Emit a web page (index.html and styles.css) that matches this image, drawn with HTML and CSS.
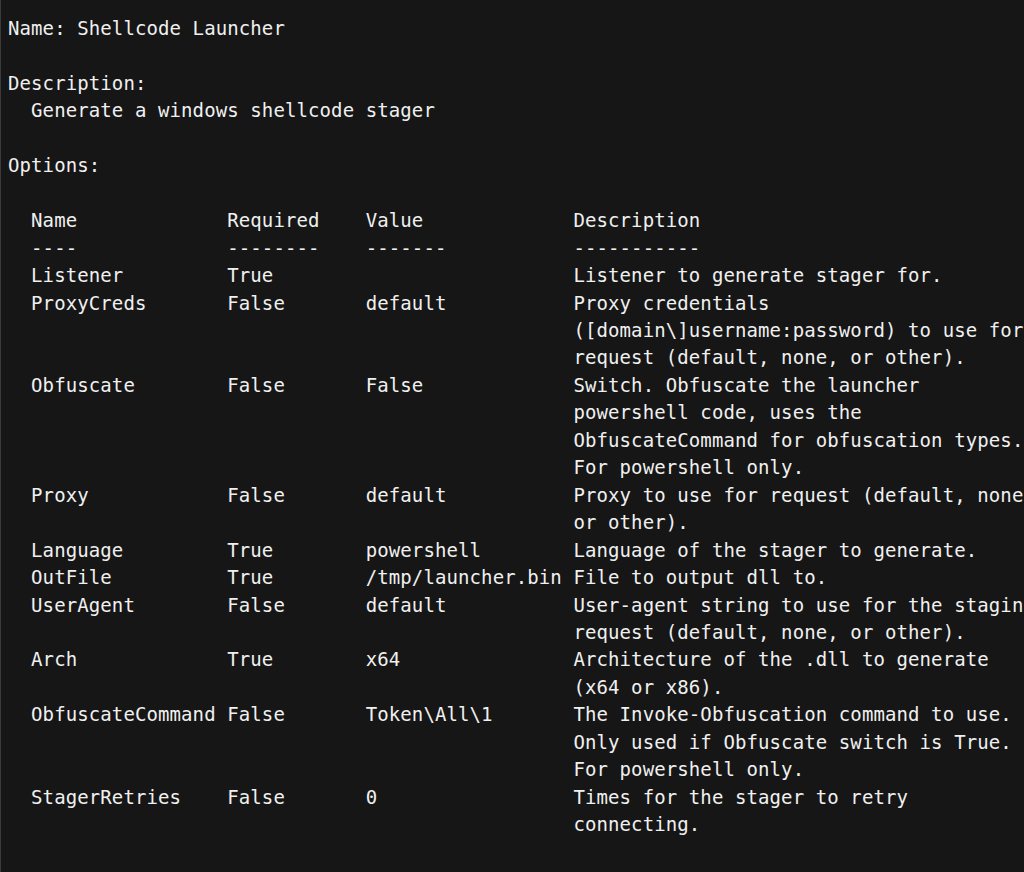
FILE: index.html
```html
<!DOCTYPE html>
<html>
<head>
<meta charset="utf-8">
<link rel="stylesheet" href="styles.css">
</head>
<body>
<main class="term">
<pre class="out">Name: Shellcode Launcher

Description:
  Generate a windows shellcode stager

Options:

  Name             Required    Value             Description
  ----             --------    -------           -----------
  Listener         True                          Listener to generate stager for.
  ProxyCreds       False       default           Proxy credentials
                                                 ([domain\]username:password) to use for
                                                 request (default, none, or other).
  Obfuscate        False       False             Switch. Obfuscate the launcher
                                                 powershell code, uses the
                                                 ObfuscateCommand for obfuscation types.
                                                 For powershell only.
  Proxy            False       default           Proxy to use for request (default, none,
                                                 or other).
  Language         True        powershell        Language of the stager to generate.
  OutFile          True        /tmp/launcher.bin File to output dll to.
  UserAgent        False       default           User-agent string to use for the staging
                                                 request (default, none, or other).
  Arch             True        x64               Architecture of the .dll to generate
                                                 (x64 or x86).
  ObfuscateCommand False       Token\All\1       The Invoke-Obfuscation command to use.
                                                 Only used if Obfuscate switch is True.
                                                 For powershell only.
  StagerRetries    False       0                 Times for the stager to retry
                                                 connecting.</pre>
</main>
</body>
</html>
```
FILE: styles.css
```css
html, body {
  margin: 0;
  padding: 0;
  background: #161616;
}
body {
  width: 1024px;
  height: 872px;
  overflow: hidden;
}
.term {
  box-sizing: border-box;
  height: 872px;
  border-left: 1px solid #3a3a3a;
  padding: 15px 0 0 7px;
  overflow: hidden;
}
.out {
  margin: 0;
  font-family: "DejaVu Sans Mono", "Liberation Mono", monospace;
  font-size: 19px;
  letter-spacing: 0.1px;
  line-height: 27.45px;
  color: #f0f0f0;
  white-space: pre;
}
```
